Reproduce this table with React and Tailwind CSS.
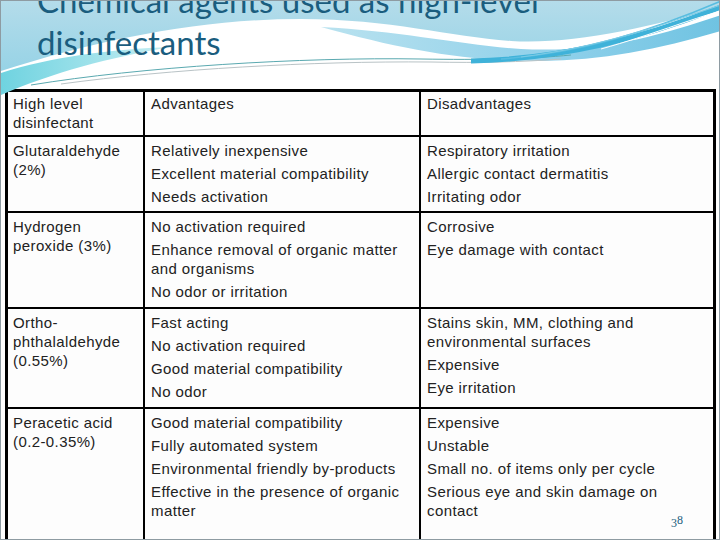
import React from "react";

const rows = [
  {
    agent: ["High level disinfectant"],
    pros: ["Advantages"],
    cons: ["Disadvantages"],
    head: true,
  },
  {
    agent: ["Glutaraldehyde (2%)"],
    pros: ["Relatively inexpensive", "Excellent material compatibility", "Needs activation"],
    cons: ["Respiratory irritation", "Allergic contact dermatitis", "Irritating odor"],
  },
  {
    agent: ["Hydrogen peroxide (3%)"],
    pros: [
      "No activation required",
      "Enhance removal of organic matter and organisms",
      "No odor or irritation",
    ],
    cons: ["Corrosive", "Eye damage with contact"],
  },
  {
    agent: ["Ortho-phthalaldehyde (0.55%)"],
    pros: ["Fast acting", "No activation required", "Good material compatibility", "No odor"],
    cons: [
      "Stains skin, MM, clothing and environmental surfaces",
      "Expensive",
      "Eye irritation",
    ],
  },
  {
    agent: ["Peracetic acid (0.2-0.35%)"],
    pros: [
      "Good material compatibility",
      "Fully automated system",
      "Environmental friendly by-products",
      "Effective in the presence of organic matter",
    ],
    cons: [
      "Expensive",
      "Unstable",
      "Small no. of items only per cycle",
      "Serious eye and skin damage on contact",
    ],
    last: true,
  },
];

function Cell({ lines, pad, right, row }) {
  return (
    <div
      className={`${pad} ${row.head ? "pt-[2px]" : "pt-[4px]"} ${right ? "border-r-2" : ""} ${
        row.last ? "" : "border-b-2"
      } border-black bg-[#fdfdfd] flex flex-col gap-[4px]`}
    >
      {lines.map((l) => (
        <p key={l}>{l}</p>
      ))}
    </div>
  );
}

function Waves() {
  return (
    <svg className="absolute left-0 top-0" width="720" height="100" viewBox="0 0 720 100">
      <defs>
        <linearGradient id="topBlue" x1="0" y1="0" x2="0" y2="1">
          <stop offset="0" stopColor="#b4dcea" />
          <stop offset="1" stopColor="#97d3e6" />
        </linearGradient>
        <linearGradient id="lowBlue" x1="0" y1="0" x2="1" y2="0">
          <stop offset="0" stopColor="#b9e2ef" />
          <stop offset="0.6" stopColor="#8fd0ea" />
          <stop offset="1" stopColor="#6fc3e2" />
        </linearGradient>
        <linearGradient id="cyan" x1="0" y1="0" x2="1" y2="0">
          <stop offset="0" stopColor="#6fd3e0" />
          <stop offset="1" stopColor="#c8eef3" />
        </linearGradient>
      </defs>
      <path d="M0,0 H720 V6 C650,26 570,44 510,40 C450,36 390,18 300,18 C200,18 100,38 0,70 Z" fill="url(#topBlue)" />
      <path
        d="M320,26 C400,30 460,44 520,48 C600,52 660,34 720,14 V30 C660,48 600,60 540,60 C460,60 400,48 320,26 Z"
        fill="url(#lowBlue)"
      />
      <path d="M0,72 C50,56 110,48 170,46 C110,56 50,72 0,94 Z" fill="url(#cyan)" />
      <path d="M30,84 C140,66 300,56 420,58 C480,59 530,58 570,54" fill="none" stroke="#5aa9b0" strokeWidth="1" />
      <path d="M60,83 C170,68 310,60 430,61 C480,62 520,61 560,58" fill="none" stroke="#b9c3c6" strokeWidth="1" />
      <path d="M470,60 C560,58 640,38 720,6" fill="none" stroke="#3fb2d9" strokeWidth="5" />
      <path d="M500,58 C580,52 650,30 720,0" fill="none" stroke="#58bde0" strokeWidth="1.5" />
      <path d="M520,56 C600,46 660,24 720,4" fill="none" stroke="#7ccbe5" strokeWidth="1" />
      <path d="M600,48 C650,34 690,18 720,10" fill="none" stroke="#ffffff" strokeWidth="1" />
    </svg>
  );
}

export default function App() {
  return (
    <div
      className="relative w-[720px] h-[540px] overflow-hidden bg-white border border-[#8e9ba2]"
      style={{ fontFamily: '"Liberation Sans", Arial, sans-serif' }}
    >
      <div className="relative h-[88px] flex flex-col">
        <Waves />
        <h1
          className="relative -mt-[22px] pl-[36px] text-[33px] leading-[42px] text-[#1a5d7e]"
          style={{ fontFamily: "Lato, sans-serif" }}
        >
          Chemical agents used as high-level
          <br />
          disinfectants
        </h1>
      </div>

      <div className="ml-[4px] w-[711px] border-[3px] border-b-0 border-black grid grid-cols-[137px_276px_292px] grid-rows-[45px_76px_96px_100px_160px] text-[15px] leading-[19px] tracking-[0.4px] text-[#222]">
        {rows.map((row, i) => (
          <React.Fragment key={i}>
            <Cell lines={row.agent} pad="pl-[5px] pr-[5px]" right row={row} />
            <Cell lines={row.pros} pad="pl-[6px] pr-[6px]" right row={row} />
            <Cell lines={row.cons} pad="pl-[6px] pr-[6px]" row={row} />
          </React.Fragment>
        ))}
      </div>

      <span
        className="absolute left-[670px] top-[513px] text-[12px] text-[#1a5d7e]"
        style={{ fontFamily: '"Liberation Serif", serif' }}
      >
        3<span className="relative -top-[3px]">8</span>
      </span>
    </div>
  );
}
